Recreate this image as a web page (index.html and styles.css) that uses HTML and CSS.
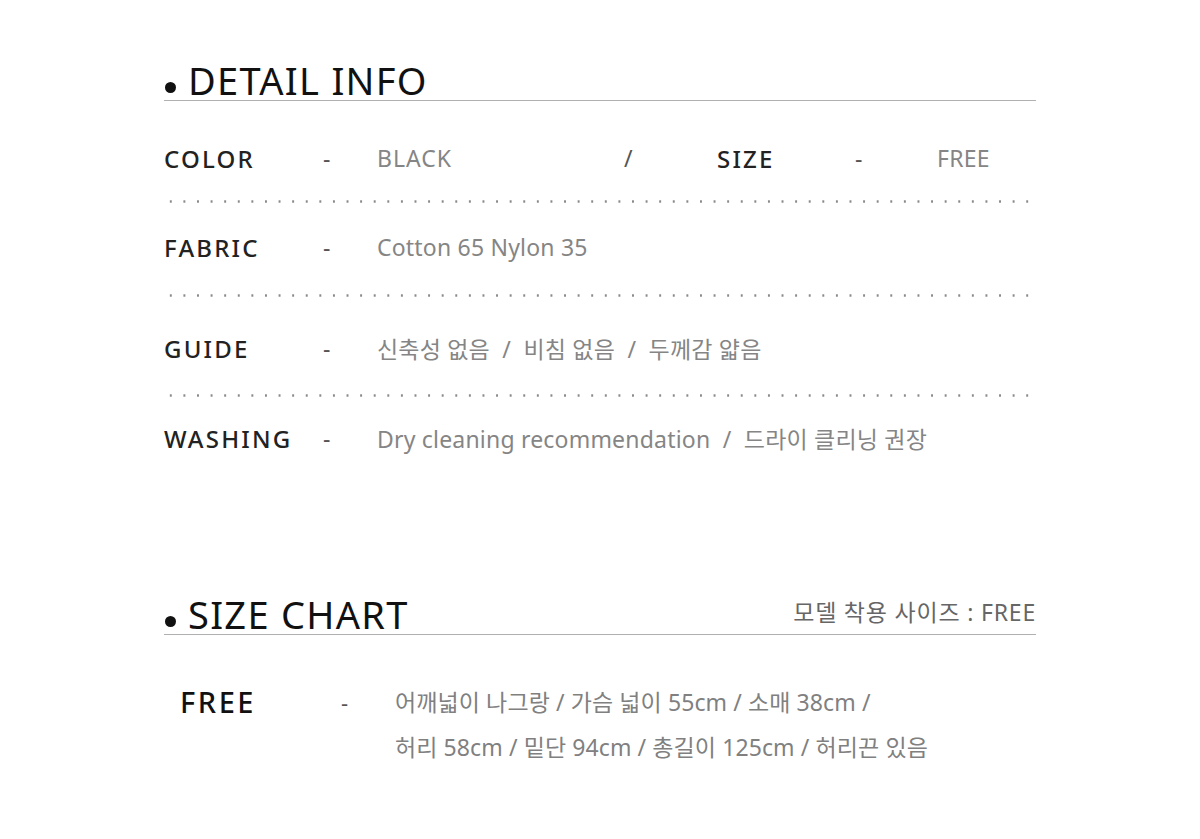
FILE: index.html
```html
<!DOCTYPE html>
<html lang="ko">
<head>
<meta charset="utf-8">
<title>Detail Info</title>
<link rel="stylesheet" href="styles.css">
</head>
<body>
<div class="page">
  <section class="detail">
    <div class="heading">
      <span class="dot"></span>
      <h2 class="heading-title">DETAIL INFO</h2>
    </div>

    <div class="row row-color">
      <span class="label">COLOR</span>
      <span class="dash">-</span>
      <span class="value value-color">BLACK</span>
      <span class="slash">/</span>
      <span class="label label-size">SIZE</span>
      <span class="dash dash-size">-</span>
      <span class="value">FREE</span>
    </div>
    <div class="dots"></div>

    <div class="row row-fabric">
      <span class="label">FABRIC</span>
      <span class="dash">-</span>
      <span class="value">Cotton 65 Nylon 35</span>
    </div>
    <div class="dots"></div>

    <div class="row row-guide">
      <span class="label">GUIDE</span>
      <span class="dash">-</span>
      <span class="value">신축성 없음&nbsp; /&nbsp; 비침 없음&nbsp; /&nbsp; 두께감 얇음</span>
    </div>
    <div class="dots"></div>

    <div class="row row-washing">
      <span class="label">WASHING</span>
      <span class="dash">-</span>
      <span class="value">Dry cleaning recommendation&nbsp; /&nbsp; 드라이 클리닝 권장</span>
    </div>
  </section>

  <section class="chart">
    <div class="heading">
      <span class="dot"></span>
      <h2 class="heading-title">SIZE CHART</h2>
      <span class="model">모델 착용 사이즈 : FREE</span>
    </div>
    <div class="chart-row">
      <span class="chart-label">FREE</span>
      <span class="chart-dash">-</span>
      <p class="chart-text">어깨넓이 나그랑 / 가슴 넓이 55cm / 소매 38cm /<br>허리 58cm / 밑단 94cm / 총길이 125cm / 허리끈 있음</p>
    </div>
  </section>
</div>
</body>
</html>
```

FILE: styles.css
```css
* { box-sizing: border-box; }

body {
  margin: 0;
  background: #fff;
  font-family: "Noto Sans", "Noto Sans CJK KR", sans-serif;
  color: #222;
}

.page {
  width: 872px;
  margin-left: 164px;
  padding-top: 58px;
}

.heading {
  display: flex;
  align-items: flex-end;
  height: 43px;
  border-bottom: 1px solid #b0b0b0;
}

.dot {
  width: 11px;
  height: 11px;
  border-radius: 50%;
  background: #111;
  margin: 0 12px 7px 1px;
  flex: none;
}

.heading-title {
  margin: 0;
  font-size: 38px;
  font-weight: 400;
  line-height: 40px;
  letter-spacing: 1.3px;
  color: #111;
}

.row {
  display: flex;
  align-items: center;
  height: 36px;
  font-size: 23px;
}

.row-color { margin-top: 39px; margin-bottom: 24px; }
.row-fabric { margin-top: 26px; margin-bottom: 29px; }
.row-guide { margin-top: 33px; margin-bottom: 28px; }
.row-washing { margin-top: 23px; }

.label {
  width: 159px;
  font-size: 24px;
  font-weight: 500;
  letter-spacing: 2.2px;
  color: #222;
  flex: none;
}

.dash {
  width: 54px;
  color: #555;
  flex: none;
}

.value {
  color: #858585;
  font-weight: 400;
  letter-spacing: 0.2px;
  white-space: nowrap;
}

.value-color { width: 247px; letter-spacing: 1px; }

.slash {
  width: 93px;
  color: #555;
  flex: none;
}

.label-size { width: 138px; }

.dash-size { width: 82px; }

.dots {
  height: 3px;
  background-image: radial-gradient(circle, #8a8a8a 1px, transparent 1.4px);
  background-size: 13.6px 3px;
  background-position: 0 0;
  background-repeat: repeat-x;
}

.chart {
  margin-top: 136px;
}

.model {
  margin-left: auto;
  margin-bottom: 6px;
  font-size: 23px;
  letter-spacing: 0.8px;
  color: #666;
}

.chart-row {
  display: flex;
  align-items: flex-start;
  margin-top: 47px;
  padding-left: 16px;
}

.chart-label {
  width: 161px;
  font-size: 29px;
  font-weight: 500;
  letter-spacing: 2.5px;
  line-height: 40px;
  color: #111;
  flex: none;
}

.chart-dash {
  width: 54px;
  font-size: 22px;
  line-height: 40px;
  color: #555;
  flex: none;
}

.chart-text {
  margin: 0;
  font-size: 23px;
  letter-spacing: 0.1px;
  line-height: 45px;
  color: #808080;
  margin-top: -2px;
}
```
